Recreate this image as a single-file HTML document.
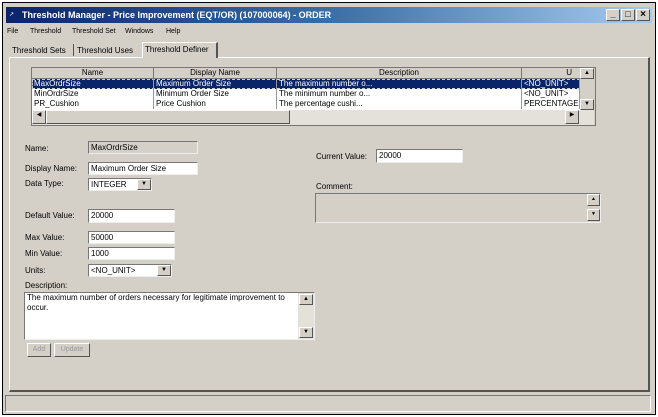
<!DOCTYPE html><html><head><style>
*{margin:0;padding:0;box-sizing:border-box}
body{width:658px;height:417px;background:#fff;position:relative;overflow:hidden;font-family:"Liberation Sans",Arial,sans-serif;font-size:8px;color:#000}
.a{position:absolute}
.win{left:2px;top:2px;width:654px;height:413px;border:1px solid #000;background:#d4d0c8}
.t{white-space:nowrap;line-height:10px}
.in{background:#fff;border-top:1px solid #777;border-left:1px solid #777;border-right:1px solid #eee;border-bottom:1px solid #eee;padding-left:2px;line-height:11px;white-space:nowrap}
.btn{background:#d4d0c8;border-top:1px solid #fff;border-left:1px solid #fff;border-right:1px solid #555;border-bottom:1px solid #555;font-size:7px;text-align:center;line-height:9px}
.cell{position:absolute;height:10px;line-height:10px;padding-left:2px;white-space:nowrap;overflow:hidden;border-right:1px solid #999}
</style></head><body>
<div class="a win"></div>
<div class="a" style="left:6px;top:7px;width:646px;height:16px;background:linear-gradient(90deg,#0a246a,#3a6ea5 50%,#a6caf0)"></div>
<div class="a t" style="left:9px;top:10px;color:#fff;font-size:6px">&#x2197;</div>
<div class="a t" style="left:22px;top:10px;color:#fff;font-weight:bold;font-size:9px">Threshold Manager - Price Improvement (EQT/OR) (107000064) - ORDER</div>
<div class="a btn" style="left:606px;top:9px;width:14px;height:12px;font-size:9px;font-weight:bold">_</div>
<div class="a btn" style="left:621px;top:9px;width:14px;height:12px;font-size:9px">□</div>
<div class="a btn" style="left:636px;top:9px;width:14px;height:12px;font-size:10px;font-weight:bold">×</div>
<div class="a t" style="left:7px;top:27px;font-size:7px">File</div>
<div class="a t" style="left:30px;top:27px;font-size:7px">Threshold</div>
<div class="a t" style="left:72px;top:27px;font-size:7px">Threshold Set</div>
<div class="a t" style="left:125px;top:27px;font-size:7px">Windows</div>
<div class="a t" style="left:166px;top:27px;font-size:7px">Help</div>
<div class="a" style="left:9px;top:57px;width:641px;height:335px;border:1px solid #fff;border-right:2px solid #555;border-bottom:2px solid #555"></div>
<div class="a t" style="left:12px;top:46px;font-size:8px">Threshold Sets</div>
<div class="a" style="left:73px;top:44px;width:1px;height:12px;background:#555"></div>
<div class="a t" style="left:77px;top:46px;font-size:8px">Threshold Uses</div>
<div class="a" style="left:142px;top:42px;width:76px;height:16px;background:#d4d0c8;border-top:1px solid #fff;border-left:1px solid #fff;border-right:2px solid #555"></div>
<div class="a t" style="left:145px;top:45px;font-size:8px">Threshold Definer</div>
<div class="a" style="left:31px;top:67px;width:565px;height:59px;border:1px solid #777;background:#d4d0c8"></div>
<div class="a" style="left:32px;top:68px;width:548px;height:11px;background:#d4d0c8;border-bottom:1px solid #777"></div>
<div class="a t" style="left:32px;top:68px;width:122px;text-align:center;border-right:1px solid #777">Name</div>
<div class="a t" style="left:154px;top:68px;width:123px;text-align:center;border-right:1px solid #777">Display Name</div>
<div class="a t" style="left:277px;top:68px;width:245px;text-align:center;border-right:1px solid #777">Description</div>
<div class="a t" style="left:522px;top:68px;width:50px;text-align:right">U</div>
<div class="a" style="left:32px;top:79px;width:548px;height:10px;background:#0a246a;color:#fff;border:1px dashed #ccc"></div>
<div class="a" style="left:32px;top:89px;width:548px;height:21px;background:#fff"></div>
<div class="a" style="color:#fff"><div class="cell" style="left:32px;top:79px;width:122px">MaxOrdrSize</div><div class="cell" style="left:154px;top:79px;width:123px">Maximum Order Size</div><div class="cell" style="left:277px;top:79px;width:245px">The maximum number o...</div><div class="cell" style="left:522px;top:79px;width:58px">&lt;NO_UNIT&gt;</div></div>
<div class="cell" style="left:32px;top:89px;width:122px">MinOrdrSize</div><div class="cell" style="left:154px;top:89px;width:123px">Minimum Order Size</div><div class="cell" style="left:277px;top:89px;width:245px">The minimum number o...</div><div class="cell" style="left:522px;top:89px;width:58px">&lt;NO_UNIT&gt;</div>
<div class="cell" style="left:32px;top:99px;width:122px">PR_Cushion</div><div class="cell" style="left:154px;top:99px;width:123px">Price Cushion</div><div class="cell" style="left:277px;top:99px;width:245px">The percentage cushi...</div><div class="cell" style="left:522px;top:99px;width:58px">PERCENTAGE</div>
<div class="a btn" style="left:580px;top:68px;width:14px;height:11px;font-size:6px">▲</div>
<div class="a btn" style="left:580px;top:99px;width:14px;height:11px;font-size:6px">▼</div>
<div class="a" style="left:32px;top:110px;width:562px;height:15px;background:#e4e1da"></div>
<div class="a btn" style="left:32px;top:110px;width:14px;height:14px;font-size:6px">◀</div>
<div class="a btn" style="left:46px;top:110px;width:244px;height:14px"></div>
<div class="a btn" style="left:565px;top:110px;width:14px;height:14px;font-size:6px">▶</div>
<div class="a t" style="left:25px;top:144px">Name:</div>
<div class="a in" style="left:88px;top:141px;width:110px;height:13px;background:#d4d0c8">MaxOrdrSize</div>
<div class="a t" style="left:25px;top:164px">Display Name:</div>
<div class="a in" style="left:88px;top:162px;width:110px;height:13px">Maximum Order Size</div>
<div class="a t" style="left:25px;top:179px">Data Type:</div>
<div class="a in" style="left:88px;top:178px;width:64px;height:13px">INTEGER</div>
<div class="a btn" style="left:137px;top:179px;width:14px;height:11px;font-size:6px">▼</div>
<div class="a t" style="left:25px;top:211px">Default Value:</div>
<div class="a in" style="left:88px;top:209px;width:87px;height:14px">20000</div>
<div class="a t" style="left:25px;top:233px">Max Value:</div>
<div class="a in" style="left:88px;top:231px;width:87px;height:13px">50000</div>
<div class="a t" style="left:25px;top:249px">Min Value:</div>
<div class="a in" style="left:88px;top:247px;width:87px;height:13px">1000</div>
<div class="a t" style="left:25px;top:266px">Units:</div>
<div class="a in" style="left:88px;top:264px;width:84px;height:13px">&lt;NO_UNIT&gt;</div>
<div class="a btn" style="left:157px;top:265px;width:14px;height:11px;font-size:6px">▼</div>
<div class="a t" style="left:25px;top:281px">Description:</div>
<div class="a in" style="left:24px;top:292px;width:291px;height:48px;white-space:normal;line-height:10px;padding-right:18px">The maximum number of orders necessary for legitimate improvement to occur.</div>
<div class="a" style="left:298px;top:293px;width:16px;height:46px;background:#e4e1da"></div>
<div class="a btn" style="left:299px;top:294px;width:14px;height:11px;font-size:6px">▲</div>
<div class="a btn" style="left:299px;top:327px;width:14px;height:11px;font-size:6px">▼</div>
<div class="a btn" style="left:27px;top:343px;width:24px;height:14px;color:#999;line-height:12px">Add</div>
<div class="a btn" style="left:54px;top:343px;width:36px;height:14px;color:#999;line-height:12px">Update</div>
<div class="a t" style="left:316px;top:152px">Current Value:</div>
<div class="a in" style="left:376px;top:149px;width:87px;height:14px">20000</div>
<div class="a t" style="left:316px;top:182px">Comment:</div>
<div class="a in" style="left:315px;top:193px;width:286px;height:30px;background:#d4d0c8"></div>
<div class="a btn" style="left:587px;top:194px;width:13px;height:12px;font-size:5px">▲</div>
<div class="a btn" style="left:587px;top:209px;width:13px;height:12px;font-size:5px">▼</div>
<div class="a" style="left:5px;top:395px;width:646px;height:17px;border-top:1px solid #777;border-left:1px solid #777;border-right:1px solid #fff;border-bottom:1px solid #fff"></div>
</body></html>
